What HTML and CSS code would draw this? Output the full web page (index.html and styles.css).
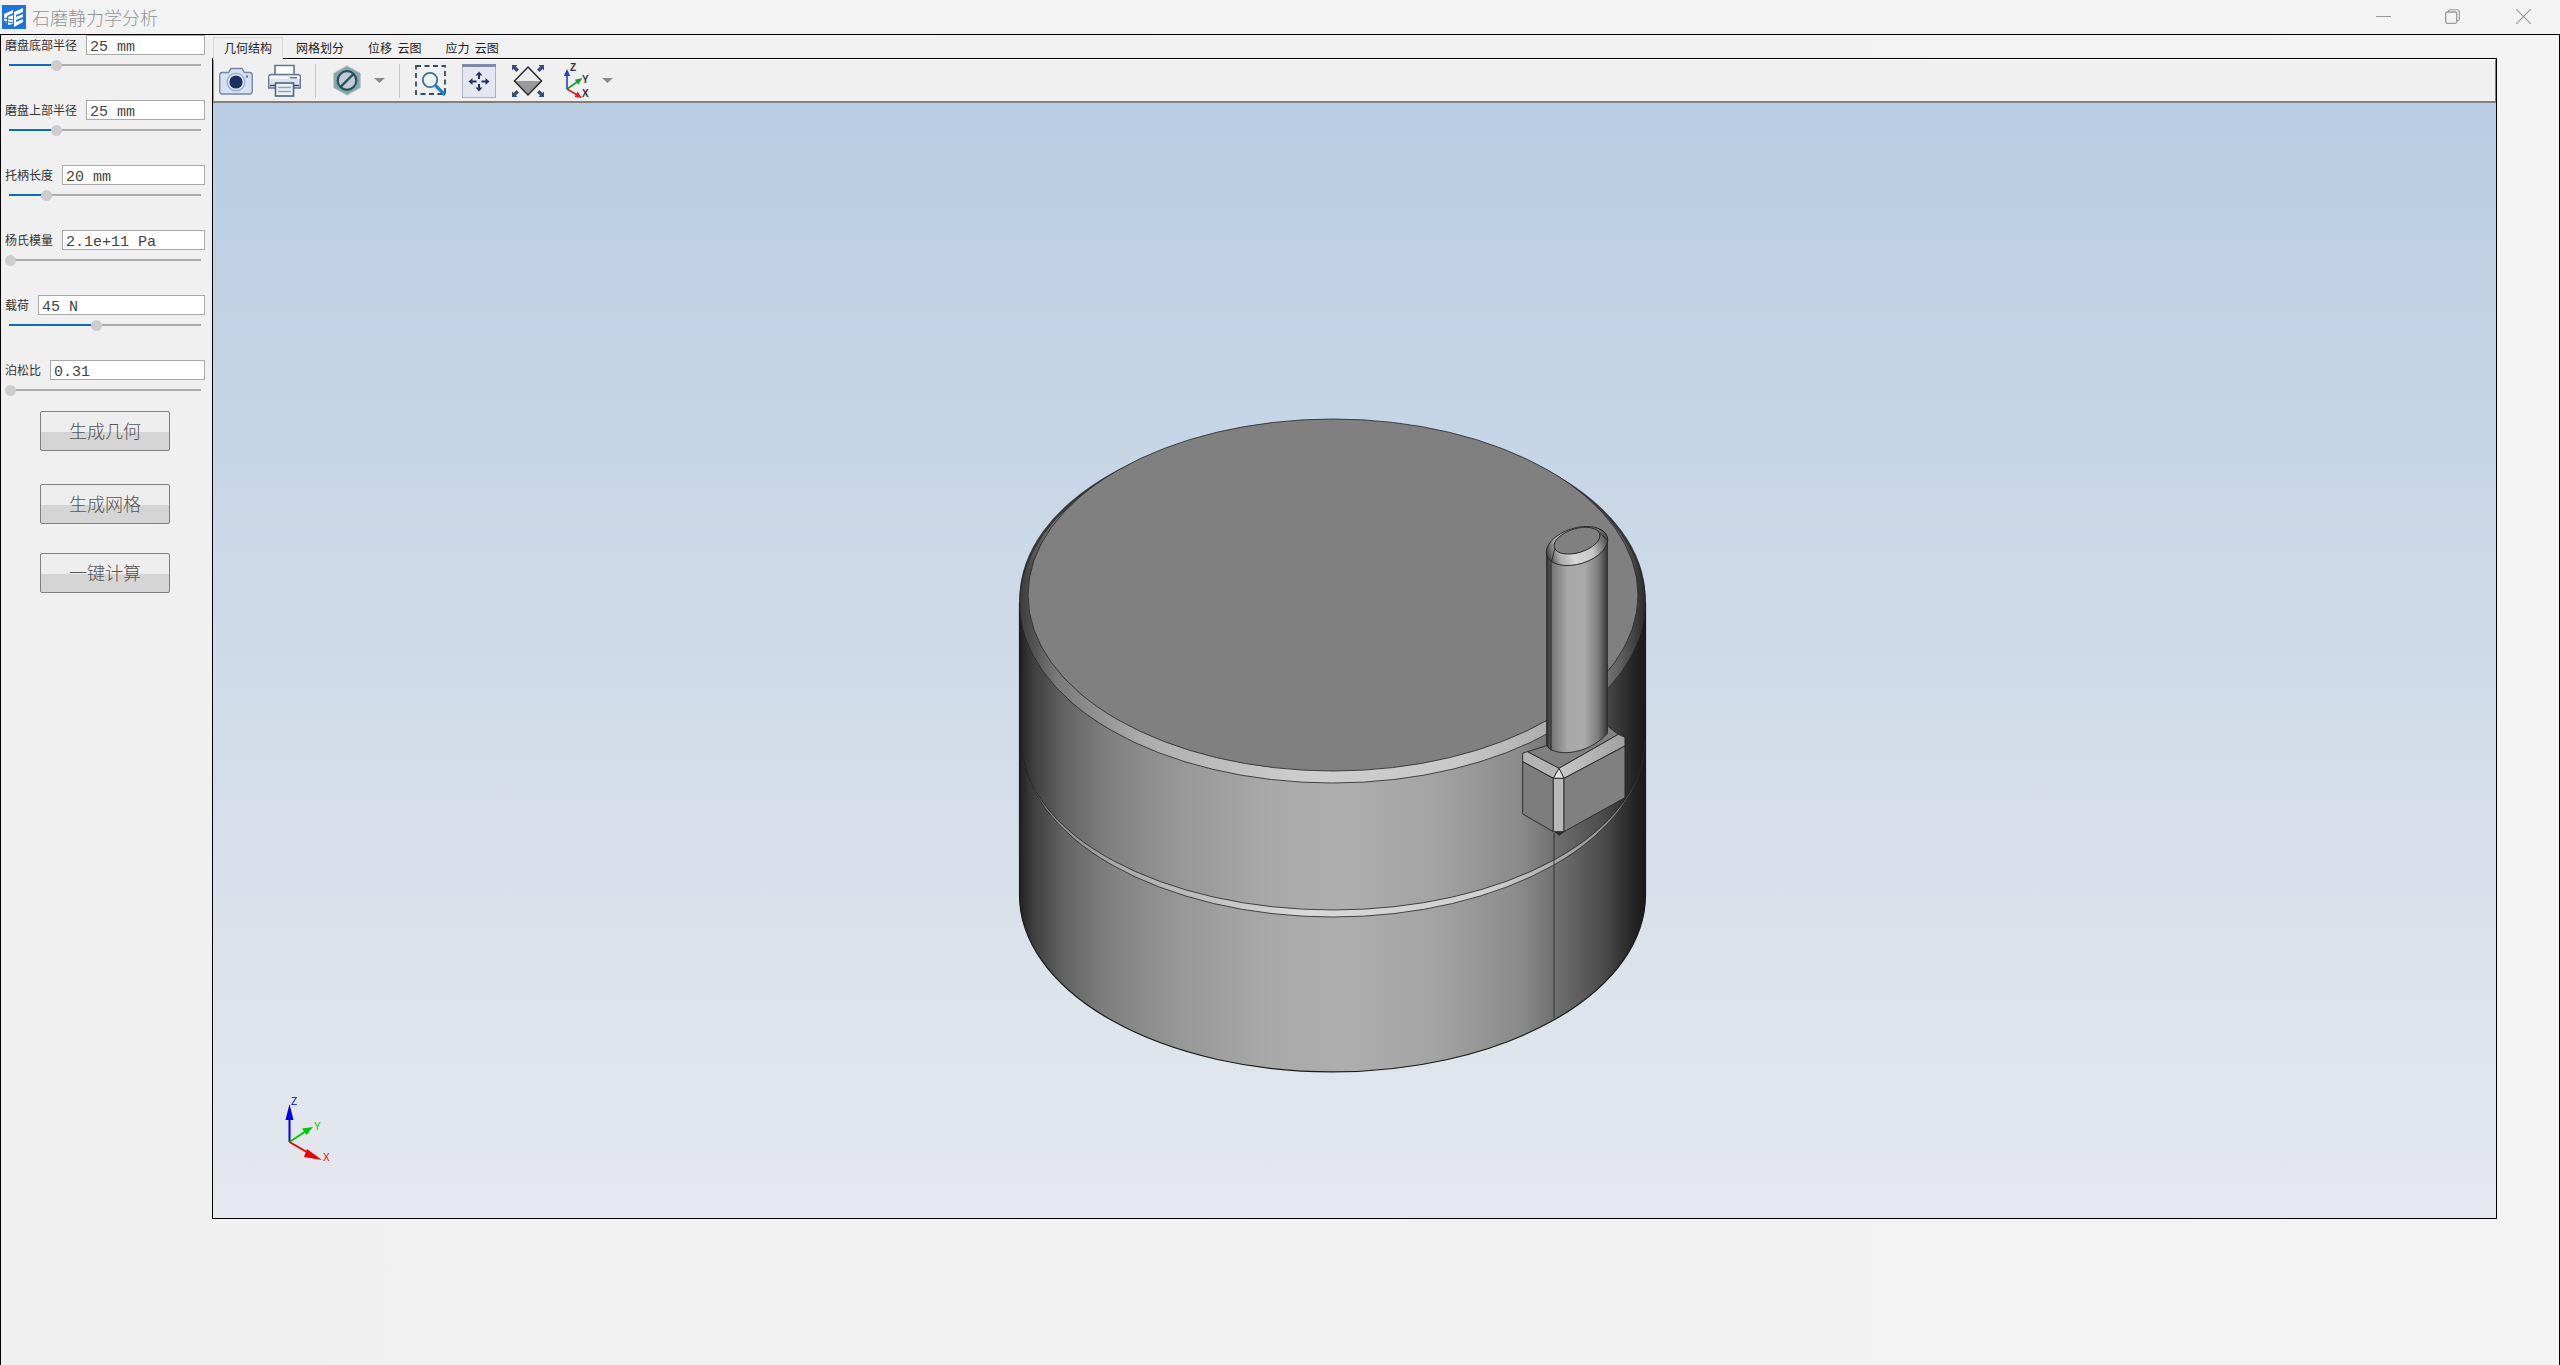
FILE: index.html
```html
<!DOCTYPE html>
<html lang="zh-CN">
<head>
<meta charset="utf-8">
<title>石磨静力学分析</title>
<link rel="stylesheet" href="styles.css">
</head>
<body>
<div class="window">
  <header class="titlebar">
    <svg class="logo" width="24" height="24" viewBox="0 0 24 24">
      <rect width="24" height="24" fill="#1c74dc"/>
      <path d="M2 9 L11 5 L11 8 L5 11 L5 18 L2 16 Z M6 12 L11 10 V19 L6 20 Z" fill="#fff"/>
      <path d="M12 7 L21 3 V7 L14 10 V12 L21 9 V12 L14 15 V17 L21 14 V17 L12 22 Z" fill="#fff"/>
      <path d="M2 13 L11 15 M2 16 L11 18" stroke="#1c74dc" stroke-width="1.2"/>
    </svg>
    <span class="app-title">石磨静力学分析</span>
    <div class="win-controls">
      <svg class="win-min" width="15" height="15" viewBox="0 0 15 15"><path d="M0 7.5H15" stroke="#999" fill="none"/></svg>
      <svg class="win-max" width="15" height="15" viewBox="0 0 15 15"><rect x=".7" y="3" width="11" height="11.3" rx="1.5" stroke="#999" stroke-width="1.3" fill="none"/><path d="M3.5 3V2a1.4 1.4 0 0 1 1.4-1.3h7.6A1.8 1.8 0 0 1 14.3 2.5V10A1.6 1.6 0 0 1 12 11.5" stroke="#999" stroke-width="1.1" fill="none"/></svg>
      <svg class="win-close" width="15" height="15" viewBox="0 0 15 15"><path d="M0 0L15 15M15 0L0 15" stroke="#999" stroke-width="1.1" fill="none"/></svg>
    </div>
  </header>

  <div class="frame">
    <aside class="sidebar">
      <div class="params">
        <div class="param">
          <div class="param-head"><span class="param-label">磨盘底部半径</span><div class="field">25 mm</div></div>
          <div class="slider"><div class="fill" style="width:47px"><span class="thumb"></span></div></div>
        </div>
        <div class="param">
          <div class="param-head"><span class="param-label">磨盘上部半径</span><div class="field">25 mm</div></div>
          <div class="slider"><div class="fill" style="width:47px"><span class="thumb"></span></div></div>
        </div>
        <div class="param">
          <div class="param-head"><span class="param-label">托柄长度</span><div class="field">20 mm</div></div>
          <div class="slider"><div class="fill" style="width:37px"><span class="thumb"></span></div></div>
        </div>
        <div class="param">
          <div class="param-head"><span class="param-label">杨氏模量</span><div class="field">2.1e+11 Pa</div></div>
          <div class="slider"><div class="fill" style="width:1px"><span class="thumb"></span></div></div>
        </div>
        <div class="param">
          <div class="param-head"><span class="param-label">载荷</span><div class="field">45 N</div></div>
          <div class="slider"><div class="fill" style="width:87px"><span class="thumb"></span></div></div>
        </div>
        <div class="param">
          <div class="param-head"><span class="param-label">泊松比</span><div class="field">0.31</div></div>
          <div class="slider"><div class="fill" style="width:1px"><span class="thumb"></span></div></div>
        </div>
      </div>
      <div class="actions">
        <button class="action">生成几何</button>
        <button class="action action-mesh">生成网格</button>
        <button class="action action-solve">一键计算</button>
      </div>
    </aside>

    <main class="main">
      <nav class="tabs">
        <span class="tab tab-active">几何结构</span>
        <span class="tab">网格划分</span>
        <span class="tab">位移&nbsp;&nbsp;云图</span>
        <span class="tab">应力&nbsp;&nbsp;云图</span>
      </nav>
      <section class="viewer">
        <div class="toolbar">
          <svg class="tool tool-camera" width="34" height="28" viewBox="0 0 34 28">
            <path d="M3 5.5H9.5L12 1.5H23L25.5 5.5H31A2.5 2.5 0 0 1 33.2 8V25A2.5 2.5 0 0 1 31 27H3A2.5 2.5 0 0 1 .8 25V8A2.5 2.5 0 0 1 3 5.5Z" fill="#d6e2f3" stroke="#74879f" stroke-width="1.4"/>
            <circle cx="17" cy="15" r="9.6" fill="#9fb0c9"/>
            <circle cx="17" cy="15" r="8" fill="#e4eaf3"/>
            <circle cx="17" cy="15" r="6.6" fill="#1c2f63"/>
            <circle cx="28" cy="9.5" r="1.2" fill="#63748f"/>
          </svg>
          <svg class="tool tool-print" width="33" height="33" viewBox="0 0 33 33">
            <path d="M7 11V1.5H26V11" fill="#fff" stroke="#62758f" stroke-width="1.6"/>
            <path d="M3 10.500H30A2.300 2.300 0 0 1 32.300 13V24H.7V13A2.300 2.300 0 0 1 3 10.500Z" fill="#dfe3ea" stroke="#62758f" stroke-width="1.400"/>
            <rect x="1.500" y="12" width="30" height="3" fill="#f3f5f8"/>
            <rect x="22" y="13" width="7" height="1.500" fill="#63748f"/>
            <rect x="7.500" y="19" width="18" height="13" fill="#eef1f5" stroke="#4e6180" stroke-width="1.600"/>
            <path d="M10 23.500H23M10 27.500H23" stroke="#8fa0b8" stroke-width="1.500"/>
            <path d="M2 21.500H7M26 21.500H31" stroke="#36496b" stroke-width="1.500"/>
          </svg>
          <span class="tool-sep sep-a"></span>
          <svg class="tool tool-hex" width="28" height="31" viewBox="0 0 28 31">
            <path d="M14 .8L27.300 8.200V22.800L14 30.200L.7 22.800V8.200Z" fill="#87a6a8" stroke="#b6c9cb" stroke-width="1"/>
            <circle cx="14" cy="15.500" r="9.300" fill="#c6cad0" stroke="#1f5263" stroke-width="2.200"/>
            <path d="M7.500 22L20.500 9" stroke="#1f5263" stroke-width="2.400"/>
          </svg>
          <svg class="tool tool-caret caret-a" width="11" height="5" viewBox="0 0 11 5"><path d="M0 0H11L5.500 5Z" fill="#8c8c8c"/></svg>
          <span class="tool-sep sep-b"></span>
          <svg class="tool tool-zoom" width="32" height="32" viewBox="0 0 32 32">
            <rect x="1" y="1" width="29" height="28" fill="none" stroke="#34476c" stroke-width="1.800" stroke-dasharray="5 3.500"/>
            <circle cx="15" cy="15" r="7.200" fill="#eef3f9" stroke="#3c6f9f" stroke-width="1.800"/>
            <path d="M20.500 20.500L30 30" stroke="#1c85c9" stroke-width="3.200"/>
          </svg>
          <svg class="tool tool-pan" width="34" height="34" viewBox="0 0 34 34">
            <rect x=".5" y=".5" width="33" height="33" fill="#e4e7ef" stroke="#aab3c4"/>
            <rect x="0" y="0" width="34" height="3" fill="#7b8ba8"/>
            <g fill="#23355c">
              <path d="M17 7.500L13.500 11.500H16V15H18V11.500H20.500Z"/>
              <path d="M17 27.500L13.500 23.500H16V20H18V23.500H20.500Z"/>
              <path d="M6.500 17.500L10.500 14V16.500H14.500V18.500H10.500V21Z"/>
              <path d="M27.500 17.500L23.500 14V16.500H19.500V18.500H23.500V21Z"/>
            </g>
          </svg>
          <svg class="tool tool-fit" width="32" height="32" viewBox="0 0 32 32">
            <path d="M16 2L29.500 16H2.500Z" fill="#ececec"/>
            <path d="M2.500 16H29.500L16 30Z" fill="#9b9b9b"/>
            <path d="M16 2L29.500 16L16 30L2.500 16Z" fill="none" stroke="#2b2b2b" stroke-width="1.500"/>
            <path d="M0 0H5.500L4 1.500L7 4.500L4.500 7L1.500 4L0 5.500ZM32 0V5.500L30.500 4L27.500 7L25 4.500L28 1.500L26.500 0ZM0 32V26.500L1.500 28L4.500 25L7 27.500L4 30.500L5.500 32ZM32 32H26.500L28 30.500L25 27.500L27.500 25L30.500 28L32 26.500Z" fill="#3b4f72"/>
          </svg>
          <svg class="tool tool-axes" width="28" height="35" viewBox="0 0 28 35">
            <path d="M4 26V9" stroke="#2244bb" stroke-width="1.600"/>
            <path d="M4 6L.8 13H7.200Z" fill="#2244bb"/>
            <path d="M4 26L17 17" stroke="#1f9a3a" stroke-width="1.600"/>
            <path d="M19.500 15L11.800 16.800L15.300 21.800Z" fill="#1f9a3a"/>
            <path d="M4 26L16 33" stroke="#e02020" stroke-width="1.600"/>
            <path d="M19 35L11.500 34L14.600 28.600Z" fill="#e02020"/>
            <text class="axis-letter" x="7" y="8">Z</text>
            <text class="axis-letter" x="19" y="20">Y</text>
            <text class="axis-letter" x="19" y="34">X</text>
          </svg>
          <svg class="tool tool-caret caret-b" width="11" height="5" viewBox="0 0 11 5"><path d="M0 0H11L5.500 5Z" fill="#8c8c8c"/></svg>
        </div>
        <div class="viewport">
          <svg class="scene" viewBox="213 103 2283 1115" width="2283" height="1115">
            <defs>
              <linearGradient id="wall" gradientUnits="userSpaceOnUse" x1="1019" y1="0" x2="1646" y2="0">
                <stop offset="0" stop-color="#1e1e1e"/><stop offset=".02" stop-color="#3c3c3c"/>
                <stop offset=".07" stop-color="#626262"/><stop offset=".14" stop-color="#7f7f7f"/>
                <stop offset=".26" stop-color="#989898"/><stop offset=".4" stop-color="#a9a9a9"/>
                <stop offset=".52" stop-color="#aeaeae"/><stop offset=".66" stop-color="#a4a4a4"/>
                <stop offset=".8" stop-color="#8a8a8a"/><stop offset=".86" stop-color="#6e6e6e"/>
                <stop offset=".93" stop-color="#4c4c4c"/><stop offset=".98" stop-color="#252525"/>
                <stop offset="1" stop-color="#191919"/>
              </linearGradient>
              <linearGradient id="bevel" gradientUnits="userSpaceOnUse" x1="1019" y1="0" x2="1646" y2="0">
                <stop offset="0" stop-color="#3a3a3a"/><stop offset=".06" stop-color="#7a7a7a"/>
                <stop offset=".2" stop-color="#adadad"/><stop offset=".45" stop-color="#cecece"/>
                <stop offset=".7" stop-color="#c8c8c8"/><stop offset=".88" stop-color="#a6a6a6"/>
                <stop offset=".96" stop-color="#5e5e5e"/><stop offset="1" stop-color="#2a2a2a"/>
              </linearGradient>
              <linearGradient id="groove" gradientUnits="userSpaceOnUse" x1="1019" y1="0" x2="1646" y2="0">
                <stop offset="0" stop-color="#777"/><stop offset=".15" stop-color="#aaa"/>
                <stop offset=".45" stop-color="#d8d8d8"/><stop offset=".75" stop-color="#d0d0d0"/>
                <stop offset=".92" stop-color="#999"/><stop offset="1" stop-color="#666"/>
              </linearGradient>
              <linearGradient id="stem" gradientUnits="userSpaceOnUse" x1="320" y1="0" x2="502" y2="0">
                <stop offset="0" stop-color="#303030"/><stop offset=".06" stop-color="#555"/>
                <stop offset=".1" stop-color="#787878"/><stop offset=".35" stop-color="#a9a9a9"/>
                <stop offset=".62" stop-color="#aaa"/><stop offset=".85" stop-color="#7c7c7c"/>
                <stop offset="1" stop-color="#383838"/>
              </linearGradient>
              <linearGradient id="cap" gradientUnits="userSpaceOnUse" x1="320" y1="0" x2="502" y2="0">
                <stop offset="0" stop-color="#4a4a4a"/><stop offset=".16" stop-color="#a8a8a8"/>
                <stop offset=".4" stop-color="#d8d8d8"/><stop offset=".72" stop-color="#c6c6c6"/>
                <stop offset="1" stop-color="#4e4e4e"/>
              </linearGradient>
              <linearGradient id="strip" gradientUnits="userSpaceOnUse" x1="357" y1="0" x2="555" y2="0">
                <stop offset="0" stop-color="#c8c8c8"/><stop offset="1" stop-color="#a0a0a0"/>
              </linearGradient>
            </defs>

            <path class="edge" d="M1019.500 603V895A313 177 0 0 0 1645.500 895V603Z" fill="url(#wall)"/>
            <ellipse cx="1332.500" cy="598" rx="313" ry="176" fill="#3a3a3a"/>
            <ellipse class="edge-thin" cx="1332.500" cy="603" rx="313" ry="180" fill="url(#bevel)"/>
            <ellipse class="edge-thin" cx="1333" cy="595" rx="305" ry="176" fill="#808080"/>

            <path class="edge-thin" d="M1021 740A312 170 0 0 0 1645 740A312 177 0 0 1 1021 740Z" fill="url(#groove)"/>
            <path class="edge-thin" d="M1554 833V1018"/>

            <g transform="translate(1440 500) scale(.33333)">
              <path class="edge-model" d="M345 995L358 1006L372 995Z" fill="#333"/>
              <polygon class="edge-model" points="262,755 505,680 535,703 357,805" fill="#808080"/>
              <polygon class="edge-model" points="248,760 248,785 340,835 357,805 262,755" fill="#b4b4b4"/>
              <polygon class="edge-model" points="357,805 535,703 555,712 555,738 372,835" fill="url(#strip)"/>
              <polygon class="edge-model" points="340,835 357,805 372,835" fill="#e2e2e2"/>
              <polygon class="edge-model" points="248,785 340,835 340,995 248,942" fill="#7d7d7d"/>
              <polygon class="edge-model" points="340,835 372,835 372,995 340,995" fill="#b9b9b9"/>
              <polygon class="edge-model" points="372,835 555,738 555,893 372,995" fill="#808080"/>
              <path class="edge-model" d="M320 155V735C335 770 440 770 502 700V120Z" fill="url(#stem)"/>
              <path class="edge-model" d="M333 190V752"/>
              <ellipse class="edge-model" cx="411" cy="138" rx="95" ry="54" transform="rotate(-17 411 138)" fill="url(#cap)"/>
              <ellipse class="edge-model" cx="411" cy="122" rx="71" ry="36" transform="rotate(-17 411 122)" fill="#808080"/>
              <path class="edge-model" d="M345 145L333 190"/>
              <path class="edge-model" d="M480 100L502 120"/>
            </g>

            <g class="triad">
              <path d="M289.500 1142V1112" stroke="#0000ee" stroke-width="2"/>
              <path d="M289.500 1104L285.500 1120H293.500Z" fill="#0000ee"/>
              <path d="M289.500 1142L306 1131" stroke="#00c800" stroke-width="2"/>
              <path d="M313 1127L302 1128.500L306.500 1135Z" fill="#00c800"/>
              <path d="M289.500 1142L312 1155" stroke="#ee0000" stroke-width="2"/>
              <path d="M322 1160L307 1149L304 1157Z" fill="#ee0000"/>
              <text class="triad-z" x="291" y="1105">Z</text>
              <text class="triad-y" x="314" y="1130">Y</text>
              <text class="triad-x" x="323" y="1161">X</text>
            </g>
          </svg>
        </div>
      </section>
    </main>
  </div>
</div>
</body>
</html>
```
FILE: styles.css
```css
* { box-sizing: border-box; }
html, body { margin: 0; height: 100%; }
body {
  background: #f2f2f2;
  font-family: "Noto Sans CJK SC", "Liberation Sans", sans-serif;
  overflow: hidden;
}
.window { width: 2560px; height: 1365px; display: flex; flex-direction: column; }

.titlebar {
  height: 34px; flex: none; display: flex; align-items: center;
  background: #f3f3f3; padding-left: 2px;
}
.logo { flex: none; margin-right: 6px; }
.app-title { font-size: 18px; line-height: 24px; color: #959595; font-weight: 300; }
.win-controls { margin-left: auto; display: flex; align-items: center; padding-right: 29px; }
.win-controls svg { display: block; margin-top: -2px; }
.win-max { margin-left: 54px; }
.win-close { margin-left: 56px; }

.frame {
  flex: 1; display: flex; min-height: 0;
  border: 1px solid #000; border-bottom: 0;
  background: linear-gradient(90deg, #f0f0f0, #f3f3f3);
}
.sidebar { width: 211px; flex: none; }
.params { display: flex; flex-direction: column; gap: 33px; }
.param { height: 32px; }
.param-head { height: 20px; display: flex; align-items: center; gap: 9px; padding: 0 7px 0 4px; }
.param-label { font-size: 12px; line-height: 20px; color: #333; white-space: nowrap; }
.field {
  flex: 1; height: 20px; background: #fff; border: 1px solid #a9a9a9;
  font-family: "Liberation Mono", monospace; font-size: 15px; line-height: 21px;
  color: #444; padding: 1px 0 0 3px; white-space: pre;
}
.slider { height: 2px; margin: 9px 11px 0 8px; background: #ababab; }
.fill { position: relative; height: 100%; background: #0f6cbd; }
.thumb {
  position: absolute; right: -5.5px; top: -4.5px; width: 11px; height: 11px;
  border-radius: 50%; background: #cdcdcd;
}

.actions { padding: 19px 0 0 39px; }
.action {
  display: block; width: 130px; height: 40px; padding: 0 0 2px; margin: 0;
  border: 1px solid #808080; border-radius: 2px;
  background: linear-gradient(#eeeeee 0, #eeeeee 52%, #d5d5d5 52%, #d5d5d5 100%);
  font-family: "Noto Sans CJK SC", sans-serif; font-size: 18px; font-weight: 300; color: #555;
}
.action-mesh { margin-top: 33px; }
.action-solve { margin-top: 29px; }

.main { width: 2285px; flex: none; display: flex; flex-direction: column; padding-top: 2px; }
.tabs { display: flex; height: 22px; flex: none; gap: 2px; padding-left: 1px; }
.tab {
  height: 21px; padding: 0 10px; border: 1px solid transparent; border-bottom: 0;
  font-size: 12px; line-height: 20px; color: #222; white-space: nowrap;
}
.tab-active {
  position: relative; z-index: 1; height: 23px; background: #f0f0f0;
  border-color: #d9d9d9; border-bottom: 0;
}
.viewer { height: 1161px; flex: none; border: 1px solid #000; display: flex; flex-direction: column; margin-top: -1px; }
.toolbar {
  height: 44px; flex: none; display: flex; align-items: center;
  background: #f0f0f0; border-top: 1px solid #fff; border-bottom: 2px solid #808080;
  border-left: 1px solid #a0a0a0; border-right: 1px solid #808080;
  padding-left: 5px;
}
.tool { display: block; flex: none; }
.tool-sep { width: 1px; height: 34px; background: #c8c8c8; flex: none; }
.tool-print { margin-left: 15px; }
.sep-a { margin-left: 14px; }
.tool-hex { margin-left: 17px; }
.caret-a { margin-left: 13px; }
.sep-b { margin-left: 14px; }
.tool-zoom { margin-left: 15px; }
.tool-pan { margin-left: 15px; }
.tool-fit { margin-left: 16px; }
.tool-axes { margin-left: 19px; }
.caret-b { margin-left: 11px; }
.axis-letter { font: 700 10px "Liberation Sans", sans-serif; fill: #333; }

.viewport {
  flex: 1; min-height: 0; overflow: hidden;
  background: linear-gradient(#b9cde4, #e6e9ee);
}
.scene { display: block; }
.edge { stroke: #1a1a1a; stroke-width: 1.2; }
.edge-thin { stroke: #222; stroke-width: .8; }
.edge-model { stroke: #222; stroke-width: 2.6; }
path.edge-thin:not([fill]), path.edge-model:not([fill]) { fill: none; }
.triad text { font: 10px "Liberation Sans", sans-serif; }
.triad-z { fill: #0000ee; }
.triad-y { fill: #00c800; }
.triad-x { fill: #ee0000; }
```
